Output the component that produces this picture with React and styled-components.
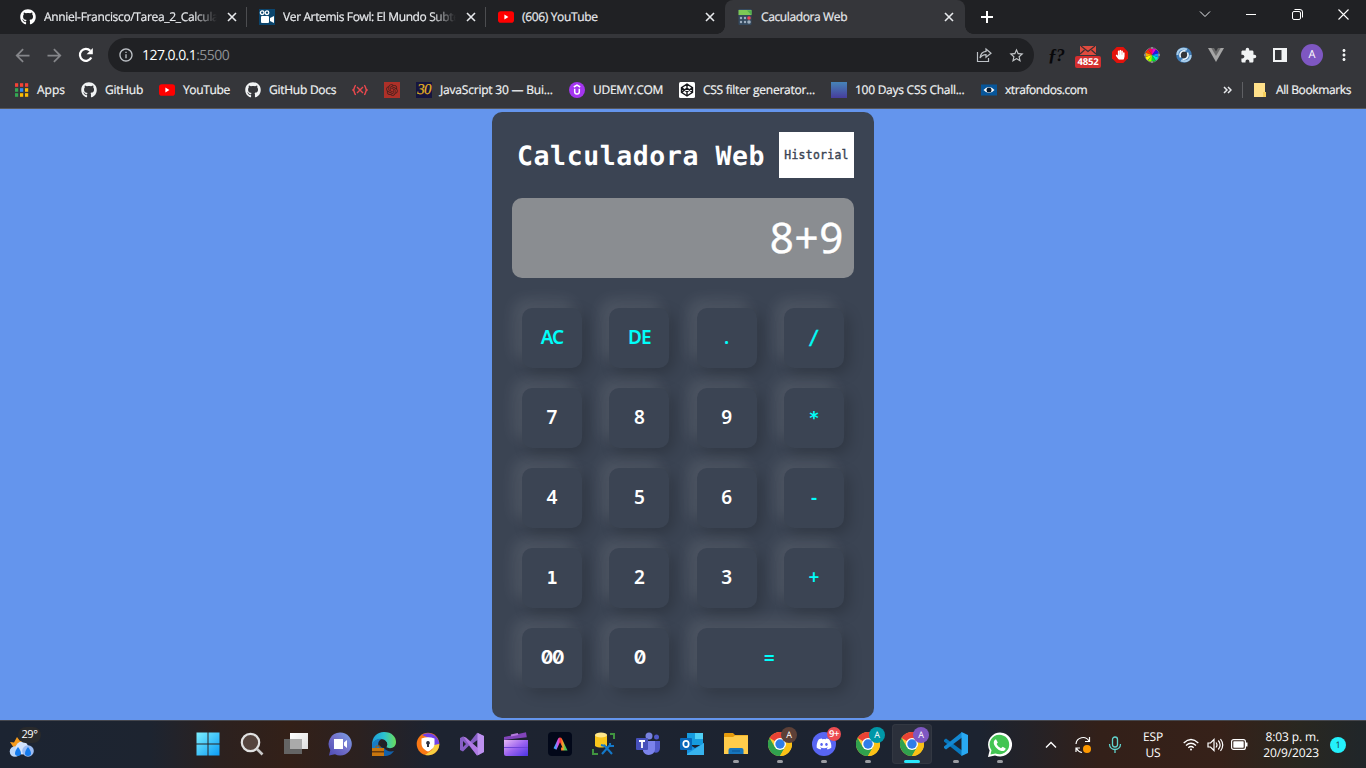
import React from "react";
import styled, { createGlobalStyle, css } from "styled-components";
import { FaGithub, FaDiscord, FaHandPaper } from "react-icons/fa";
import { RiOpenaiFill } from "react-icons/ri";
import { MdExtension, MdStarBorder, MdArrowBack, MdArrowForward, MdMoreVert, MdInfoOutline } from "react-icons/md";

const ui = `"Open Sans", "Noto Sans", sans-serif`;
const mono = `"DejaVu Sans Mono", "Liberation Mono", monospace`;

const GlobalStyle = createGlobalStyle`
  * { box-sizing: border-box; }
  html, body { margin: 0; height: 100%; overflow: hidden; }
  body { font-family: ${ui}; font-size: 12px; color: #fff; text-rendering: geometricPrecision; }
  svg { display: block; flex: none; }
`;

const Screen = styled.div`
  display: flex;
  flex-direction: column;
  width: 1366px;
  height: 768px;
  background: #6495ed;
`;

/* ---------- browser chrome ---------- */
const TabStrip = styled.header`
  display: flex;
  height: 34px;
  padding-left: 8px;
  background: #202124;
`;

const TabBox = styled.div`
  position: relative;
  display: flex;
  align-items: center;
  width: 239px;
  height: 34px;
  padding: 0 8px 0 12px;
  gap: 8px;
  ${(p) => p.$divider && css`
    background: linear-gradient(#4c4d50, #4c4d50) right 0 top 7px / 1px 20px no-repeat;
  `}
  ${(p) => p.$active && css`
    width: 240px;
    padding-right: 9px;
    background: #35363a;
    border-radius: 8px 8px 0 0;
    &::before, &::after {
      content: "";
      position: absolute;
      bottom: 0;
      width: 8px;
      height: 8px;
    }
    &::before { left: -8px; background: radial-gradient(circle at 0 0, transparent 7.5px, #35363a 8px); }
    &::after { right: -8px; background: radial-gradient(circle at 100% 0, transparent 7.5px, #35363a 8px); }
  `}
`;

const Favicon = styled.span`
  display: flex;
  justify-content: center;
  width: 16px;
  flex: none;
`;

const TabTitle = styled.span`
  flex: 1;
  min-width: 0;
  white-space: nowrap;
  line-height: 18px;
  color: #e8eaed;
  -webkit-text-stroke: 0.2px #e8eaed;
  letter-spacing: ${(p) => p.$spacing || -0.38}px;
  ${(p) => p.$fade && css`mask-image: linear-gradient(90deg, #000 calc(100% - 24px), transparent);`}
`;

const NewTab = styled.div`
  display: flex;
  align-items: center;
  padding-left: 16px;
  flex: 1;
`;

const WindowButtons = styled.div`
  display: flex;
  height: 28px;
`;

const WindowButton = styled.div`
  display: grid;
  place-items: center;
  width: 46px;
`;

const Toolbar = styled.div`
  display: flex;
  align-items: center;
  height: 38px;
  padding: 4px 6px 0;
  background: #35363a;
`;

const ToolButton = styled.div`
  display: grid;
  place-items: center;
  width: 32px;
  height: 34px;
  flex: none;
  color: ${(p) => p.$color || "#85868a"};
`;

const AddressBar = styled.div`
  display: flex;
  align-items: center;
  width: 926px;
  height: 34px;
  margin: 0 6px 0 6px;
  padding: 0 2px 0 10px;
  border-radius: 17px;
  background: #202124;
  color: #bdc1c6;
`;

const Url = styled.span`
  flex: 1;
  margin-left: 8px;
  padding-top: 1px;
  font-size: 14px;
  line-height: 20px;
  letter-spacing: -0.54px;
  color: #fff;
  span { color: #8f9195; }
`;

const MailExtension = styled.div`
  display: flex;
  flex-direction: column;
  align-items: center;
  gap: 1px;
  padding-top: 4px;
`;

const Count = styled.span`
  width: 26px;
  height: 12px;
  border-radius: 2px;
  background: #d32f2f;
  color: #fff;
  font: 700 9.5px/12px ${ui};
  letter-spacing: -0.2px;
  text-align: center;
`;

const FormulaMark = styled.span`
  font: italic 700 18px/24px "Liberation Serif", serif;
  letter-spacing: -1px;
  color: #08080a;
`;

const Avatar = styled.span`
  display: grid;
  place-items: center;
  width: 22px;
  height: 22px;
  border-radius: 50%;
  background: #7e57c2;
  color: #fff;
  font: 400 11px/22px ${ui};
`;

const Bookmarks = styled.nav`
  display: flex;
  align-items: center;
  height: 37px;
  padding-left: 13px;
  background: #35363a;
  border-bottom: 1px solid #56575b;
`;

const BookmarkItem = styled.div`
  display: flex;
  align-items: center;
  gap: 8px;
  width: ${(p) => p.$width}px;
  flex: none;
  white-space: nowrap;
  line-height: 18px;
  letter-spacing: ${(p) => p.$spacing ?? -0.26}px;
  color: #f1f3f4;
  -webkit-text-stroke: 0.2px #f1f3f4;
`;

const BookmarkDivider = styled.span`
  width: 1px;
  height: 16px;
  margin-right: 11px;
  background: #5f6064;
`;

const Gradient = styled.span`
  width: 16px;
  height: 16px;
  background: linear-gradient(#4684b8, #473d9c);
`;

const ThirtyMark = styled.span`
  width: 16px;
  height: 16px;
  background: #15153f;
  color: #e6b422;
  font: italic 400 15px/16px "Liberation Serif", serif;
  letter-spacing: -0.7px;
  text-align: center;
  -webkit-text-stroke: 0.2px #e6b422;
`;

/* ---------- calculator ---------- */
const Page = styled.main`
  display: flex;
  justify-content: center;
  align-items: flex-start;
  height: 611px;
  padding-top: 3px;
`;

const Calculator = styled.section`
  width: 382px;
  height: 606px;
  padding: 20px;
  border-radius: 10px;
  background: #3b4453;
  font-family: ${mono};
`;

const Heading = styled.div`
  display: flex;
  align-items: center;
  justify-content: space-between;
  height: 46px;
  padding-left: 5px;
`;

const Title = styled.h1`
  margin: 0;
  padding-top: 4px;
  font: 700 26.5px/36px ${mono};
  letter-spacing: 0.59px;
  white-space: nowrap;
`;

const HistoryButton = styled.button`
  width: 75px;
  height: 46px;
  padding: 0;
  border: 0;
  background: #fff;
  color: #3b4453;
  font: 400 11.4px/16px ${mono};
  letter-spacing: 0.3px;
  -webkit-text-stroke: 0.4px #3b4453;
`;

const Display = styled.div`
  height: 80px;
  margin-top: 20px;
  padding-right: 10px;
  border-radius: 10px;
  background: #8a8d91;
  font: 400 42px/80px "Noto Sans", sans-serif;
  letter-spacing: 0.7px;
  text-align: right;
  -webkit-text-stroke: 0.4px #fff;
`;

const Keypad = styled.div`
  display: grid;
  grid-template-columns: repeat(4, 60px);
  grid-auto-rows: 60px;
  justify-content: space-between;
  row-gap: 20px;
  padding: 30px 10px 0;
`;

const Key = styled.button`
  padding: 0 0 1px;
  border: 0;
  border-radius: 10px;
  background: #3b4453;
  color: ${(p) => (p.$accent ? "#00fefa" : "#fff")};
  font: 600 19px/59px "Noto Sans", sans-serif;
  box-shadow: -8px -8px 15px rgba(255, 255, 255, 0.1), 5px 5px 15px rgba(0, 0, 0, 0.2);
  ${(p) => p.$face === "mono" && css`font: 700 17.5px/60px ${mono};`}
  ${(p) => p.$face === "zero" && css`
    font: 700 18.5px/59px Inter, sans-serif;
    font-feature-settings: "zero";
    letter-spacing: -1.2px;
  `}
  ${(p) => p.$face === "pair" && css`letter-spacing: -1px; font-size: 19px;`}
  ${(p) => p.$face === "light" && css`font: 400 19px/59px ${mono}; -webkit-text-stroke: 0.5px #00fefa;`}
  ${(p) => p.$wide && css`grid-column: span 2; width: 145px;`}
`;

/* ---------- taskbar ---------- */
const Taskbar = styled.footer`
  display: flex;
  height: 48px;
  border-top: 1px solid #45474e;
  background: linear-gradient(90deg, #1c2432 0, #1d2430 150px, #2c211f 220px, #332018 290px, #2b2120 360px, #1d2330 430px,
    #1c2330 980px, #242227 1030px, #332019 1100px, #362119 1220px, #292720 1300px, #20262a 1366px);
`;

const Weather = styled.div`
  position: relative;
  width: 188px;
  padding: 16px 0 0 9px;
`;

const Temperature = styled.span`
  position: absolute;
  left: 18px;
  top: 6px;
  width: 23px;
  height: 16px;
  border-radius: 8px;
  background: #292a2c;
  font: 400 11px/16px ${ui};
  letter-spacing: -0.4px;
  text-align: center;
`;

const Apps = styled.div`
  display: flex;
  gap: 4px;
  padding-top: 3px;
  width: 845px;
`;

const AppSlot = styled.div`
  position: relative;
  display: flex;
  justify-content: center;
  width: 40px;
  height: 40px;
  padding-top: 8px;
  border-radius: 4px;
  ${(p) => p.$active && css`background: #2b303b; box-shadow: inset 0 0 0 1px #333842;`}
`;

const Running = styled.span`
  position: absolute;
  bottom: 1px;
  left: 50%;
  width: ${(p) => (p.$active ? 16 : 6)}px;
  height: 3px;
  border-radius: 2px;
  transform: translateX(-50%);
  background: ${(p) => (p.$active ? "#29e7fb" : "#9b9da2")};
`;

const Badge = styled.span`
  position: absolute;
  top: 3px;
  right: 3px;
  width: 16px;
  height: 16px;
  border-radius: 50%;
  background: ${(p) => p.$color};
  color: #fff;
  font: 400 9px/16px ${ui};
  text-align: center;
  ${(p) => p.$count && css`width: 14px; height: 14px; font: 600 9.5px/14px ${ui}; letter-spacing: -0.5px;`}
`;

const Tray = styled.div`
  display: flex;
  align-items: center;
  flex: 1;
  padding-left: 2px;
`;

const TrayIcon = styled.div`
  display: grid;
  place-items: center;
  width: ${(p) => p.$width || 32}px;
  height: 24px;
  flex: none;
`;

const Language = styled.div`
  width: 44px;
  text-align: center;
  line-height: 16px;
  letter-spacing: -0.2px;
`;

const Clock = styled.div`
  width: 64px;
  text-align: right;
  line-height: 16px;
  letter-spacing: -0.12px;
  white-space: nowrap;
`;

const Notice = styled.span`
  width: 16px;
  height: 16px;
  margin-left: 11px;
  border-radius: 50%;
  background: #24f0fb;
  color: #17353a;
  font: 400 9px/16px ${ui};
  text-align: center;
`;

/* ---------- drawings ---------- */
const Close = () => (
  <svg width="14" height="14" viewBox="0 0 14 14" stroke="#e8eaed" strokeWidth="1.6"><path d="M3 3l8 8M11 3l-8 8" /></svg>
);
const Reload = () => (
  <svg width="16" height="16" viewBox="0 0 16 16"><path d="M13.300 10.500A6 6 0 1 1 12.300 3.700" fill="none" stroke="#fff" strokeWidth="2.200" /><path d="M14.800 1v6.200H8.600z" fill="#fff" /></svg>
);
const YouTube = () => (
  <svg width="16" height="16" viewBox="0 0 16 16"><rect y="2.3" width="16" height="11.4" rx="2.8" fill="#f00" /><path d="M6.4 5.6v4.8l4-2.4z" fill="#fff" /></svg>
);
const Movie = () => (
  <svg width="16" height="16" viewBox="0 0 16 16"><rect width="16" height="16" fill="#0b456d" /><g fill="none" stroke="#fff" strokeWidth="1.3"><circle cx="3.2" cy="3.7" r="1.8" /><circle cx="8" cy="3.7" r="1.8" /></g><rect x="2" y="7" width="8" height="7" rx="1" fill="#fff" /><path d="M11 9l4-2v7l-4-2z" fill="#fff" /></svg>
);
const CalcIcon = () => (
  <svg width="16" height="16" viewBox="0 0 16 16"><rect x="1.5" width="13" height="16" rx="1" fill="#35495e" /><path d="M1.5 1h13v5h-13z" fill="#7ec855" /><path d="M10 1.5h4.5V6z" fill="#4fae50" /><g fill="#9fb0c0"><circle cx="4" cy="9" r="1.2" /><circle cx="8" cy="9" r="1.2" /><circle cx="4" cy="13" r="1.2" /><circle cx="8" cy="13" r="1.2" /><circle cx="12" cy="13" r="1.8" /></g><circle cx="12" cy="9" r="1.8" fill="#ef4557" /></svg>
);
const AppsGrid = () => {
  const colors = ["#f44336", "#f44336", "#f44336", "#34a853", "#2f8df5", "#fbbc04", "#34a853", "#fbbc04", "#fbbc04"];
  return (
    <svg width="16" height="16" viewBox="0 0 16 16">
      {colors.map((c, i) => <rect key={i} x={2 + (i % 3) * 5} y={1.2 + Math.floor(i / 3) * 5} width="3.2" height="3.6" fill={c} />)}
    </svg>
  );
};
const Brackets = () => (
  <svg width="16" height="16" viewBox="0 0 16 16" fill="none" stroke="#e9484d" strokeWidth="1.4"><path d="M4 3.5C1.500 3.500 3.500 7 1 8c2.500 1 .5 4.500 3 4.500M12 3.500c2.500 0 .5 3.500 3 4.500-2.500 1-.5 4.500-3 4.500M5 5l6 6M11 5l-6 6" /></svg>
);
const Spiral = () => (
  <svg width="16" height="16" viewBox="0 0 16 16"><rect width="16" height="16" fill="#ad3028" /><g color="#42201d"><RiOpenaiFill x="1" y="1" size={14} /></g></svg>
);
const Udemy = () => (
  <svg width="16" height="16" viewBox="0 0 16 16"><circle cx="8" cy="8" r="8" fill="#a435f0" /><path d="M4.8 5L8 3.1 11.2 5M5.7 6.8v3c0 3 4.6 3 4.6 0v-3" fill="none" stroke="#fff" strokeWidth="1.5" /></svg>
);
const Codepen = () => (
  <svg width="16" height="16" viewBox="0 0 16 16"><rect width="16" height="16" rx="1.5" fill="#fff" /><path d="M8 2l5.5 3.6v4.8L8 14l-5.5-3.6V5.600zM8 2v3.600M8 10.400V14M2.500 5.600L8 9.800l5.500-4.200M2.500 10.400L8 6.200l5.500 4.200" fill="none" stroke="#16171b" strokeWidth="1.400" /></svg>
);
const Eye = () => (
  <svg width="16" height="16" viewBox="0 0 16 16"><rect y="2.500" width="16" height="11" fill="#07569a" /><path d="M2.500 8Q8 2 13.500 8 8 14 2.500 8" fill="#fff" /><circle cx="8" cy="8" r="2.500" fill="#07182b" /></svg>
);
const Note = () => (
  <svg width="14" height="16" viewBox="0 0 14 16"><path d="M0 1h11v9h1v5H0z" fill="#ffe08a" /><path d="M9 10h3v5H9z" fill="#f7cf5c" /></svg>
);
const Share = () => (
  <svg width="16" height="16" viewBox="0 0 16 16" fill="none" stroke="#bdc1c6" strokeWidth="1.200"><path d="M1.500 5v9.500h11V11M10 2l5 4.200-5 4V7.700C7.500 7.700 5.600 8.500 4 11c.4-3.500 2.600-6.200 6-6.600z" /></svg>
);
const Mail = () => (
  <svg width="18" height="9" viewBox="0 0 18 9"><path d="M1 0h16v9H1z" fill="#df4b3e" /><path d="M2 0l7 5.500L16 0M1 8l4.500-4M17 8l-4.500-4" fill="none" stroke="#3a3034" strokeWidth="1.200" /></svg>
);
const BlockHand = () => (
  <svg width="16" height="16" viewBox="0 0 16 16"><path d="M4.700 0h6.600L16 4.700v6.600L11.300 16H4.700L0 11.300V4.700z" fill="#e3120b" /><g color="#fff"><FaHandPaper x="3.200" y="2.700" size={10} /></g></svg>
);
const Wheel = () => {
  const colors = ["#e0c", "#f05", "#f30", "#fa0", "#ff0", "#9f0", "#0d3", "#0ec", "#09f", "#21e"];
  return (
    <svg width="16" height="16" viewBox="-8 -8 16 16">
      <circle r="7.200" fill="none" stroke="#87878a" strokeWidth=".8" />
      {colors.map((c, i) => (
        <path key={c} d="M0 0L-2.200-7A7.300 7.300 0 0 1 2.200-7z" fill={c} transform={`rotate(${i * -36 + 20}) scale(.93)`} />
      ))}
      <path d="M-1-8h2v2h-2zM-1 6h2v2h-2zM-8-1h2v2h-2zM6-1h2v2H6z" fill="#87878a" />
    </svg>
  );
};
const Swirl = () => (
  <svg width="16" height="16" viewBox="0 0 16 16" fill="none"><circle cx="8" cy="8" r="5.600" stroke="#3f7bb5" strokeWidth="4.400" /><path d="M1.500 8C1 3 5.500.500 11 2.500M14.500 8c.5 5-4 7.500-9.500 5.500" stroke="#a9cdea" strokeWidth="2" /><path d="M4.500 10.500C2.500 6 6 3 9.500 4M11.500 5.500c2 4.500-1.500 7.500-5 6.500" stroke="#eef6fc" strokeWidth="1.500" /></svg>
);
const Vue = () => (
  <svg width="16" height="16" viewBox="0 0 16 16"><path d="M0 1h16L8 15z" fill="#a5a5a5" /><path d="M3.300 1h9.400L8 9z" fill="#6b6b6b" /><path d="M6 1h4L8 4.500z" fill="#35363a" /></svg>
);
const SidePanel = () => (
  <svg width="14" height="14" viewBox="0 0 14 14"><path d="M0 0h14v14H0z" fill="#f1f3f4" /><path d="M2 2h6.500v10H2z" fill="#35363a" /></svg>
);
const WeatherIcon = () => (
  <svg width="25" height="21" viewBox="0 0 25 21"><path d="M1 5l4 .5L8 0l3 4 3-1v8H5L1 5z" fill="#f59a1c" /><circle cx="6" cy="14.500" r="5.300" fill="#bcd7fa" /><circle cx="13" cy="11" r="6.500" fill="#d3e3fb" /><circle cx="19" cy="14" r="5.800" fill="#9dbdf3" /><path d="M9 10c4 5 4 9 0 9s-4-4 0-9zM19 10c4 5 4 9 0 9s-4-4 0-9z" fill="#147bed" /></svg>
);
const Windows = () => (
  <svg width="24" height="24" viewBox="0 0 24 24"><defs><linearGradient id="win" x1="0" y1="0" x2="1" y2="1" gradientUnits="objectBoundingBox"><stop stopColor="#7df0ff" /><stop offset="1" stopColor="#0a9bf5" /></linearGradient></defs><path d="M.5.500h11v11H.5zM12.500.500h11v11h-11zM.5 12.500h11v11H.5zM12.500 12.500h11v11h-11z" fill="url(#win)" /></svg>
);
const Search = () => (
  <svg width="24" height="24" viewBox="0 0 24 24"><circle cx="10.500" cy="10.500" r="8.700" fill="#55443e" stroke="#e1e1e1" strokeWidth="2.200" /><path d="M17 17l5.500 5.500" stroke="#c9c9c9" strokeWidth="2.600" /></svg>
);
const TaskView = () => (
  <svg width="24" height="24" viewBox="0 0 24 24"><defs><linearGradient id="tv" x1="0" y1="0" x2="1" y2="1"><stop stopColor="#fff" /><stop offset="1" stopColor="#ddd" /></linearGradient></defs><path d="M6 1h18v16H6z" fill="url(#tv)" /><path d="M0 7h18v15H0z" fill="#646464" /><path d="M6 7h12v10H6z" fill="#aaa" /></svg>
);
const Chat = () => (
  <svg width="24" height="24" viewBox="0 0 24 24"><defs><linearGradient id="chat" x1="0" y1="1" x2="1" y2="0"><stop stopColor="#4d4bb5" /><stop offset=".5" stopColor="#7370c9" /><stop offset="1" stopColor="#7aa3ea" /></linearGradient></defs><path d="M12 .5a11.500 11.500 0 1 1-5 21.700L1 23.500 2.300 18A11.500 11.500 0 0 1 12 .5z" fill="url(#chat)" /><path d="M6 7h9v10H6zM16 10.500L19 8v8l-3-2.500z" fill="#fff" /></svg>
);
const Edge = () => (
  <svg width="24" height="24" viewBox="0 0 24 24"><defs><linearGradient id="edge"><stop stopColor="#1d9dd9" /><stop offset=".5" stopColor="#2bc2d0" /><stop offset="1" stopColor="#6bdd5b" /></linearGradient></defs><path d="M.2 12C0 20 5 24 12 24c5 0 8-2 10-5-4 1-8 0-10-3z" fill="#1261ab" /><path d="M0 13C0 5 5 0 12 0c8 0 12 5 12 10 0 6-6 7.500-10 5 3-3 0-8-5-8-4 0-7 2-9 6z" fill="url(#edge)" /><path d="M0 12c2-4 6-6 10-5-4 1-5 6-2 9H0z" fill="#187cc4" /><circle cx="12" cy="12.500" r="3.200" fill="#202228" /><path d="M0 16h12v8H0z" fill="#c9760e" /><path d="M0 19h12v1.500H0z" fill="#6b3b0b" /><path d="M4 16v-2h4v2" fill="none" stroke="#a25d10" /></svg>
);
const Shield = () => (
  <svg width="24" height="24" viewBox="0 0 24 24"><circle cx="12" cy="12" r="11.300" fill="#fa7814" /><path d="M6 3a11.300 11.300 0 0 1 17.300 9L18 14V8z" fill="#7142e8" /><path d="M23.300 12A11.300 11.300 0 0 1 9 22.900l7-5 2-5z" fill="#f7ce41" /><path d="M5.500 6.500Q12 4 18.500 6.500v5c0 4-3 6.500-6.500 8-3.500-1.500-6.500-4-6.500-8z" fill="#fff" /><path d="M12 9a1.900 1.900 0 0 1 1 3.500V15h-2v-2.500A1.900 1.900 0 0 1 12 9z" fill="#2d3040" /></svg>
);
const VisualStudio = () => (
  <svg width="24" height="24" viewBox="0 0 24 24"><path d="M0 6l3-1.500 6 6.500L17 1l7 3v16l-7 3.500-8-10-6 6L0 18zM3 9v6l3-3zM17.500 8L12 12l5.500 4z" fill="#865fc5" fillRule="evenodd" /><path d="M3 4.500L17 23.500l1-7.300L6 5.500z" fill="#b079e3" /><path d="M17.500.8L24 4v16l-6.500 3.500z" fill="#bd91ef" /></svg>
);
const Clapper = () => (
  <svg width="24" height="24" viewBox="0 0 24 24"><defs><linearGradient id="clap" x1="0" y1="0" x2="1" y2="1"><stop stopColor="#e8b7f5" /><stop offset=".5" stopColor="#9b63ef" /><stop offset="1" stopColor="#4a34e5" /></linearGradient></defs><path d="M0 5L22 .3l.8 5L0 8z" fill="#8144ba" /><path d="M0 8h24v16H2q-2 0-2-2z" fill="url(#clap)" /><path d="M0 15.500h24" stroke="#6f43d6" /><path d="M7 3.500l7-1.500" stroke="#b57bde" strokeWidth="2" /></svg>
);
const Adobe = () => (
  <svg width="24" height="24" viewBox="0 0 24 24"><defs><linearGradient id="adobe"><stop stopColor="#37a7ff" /><stop offset=".3" stopColor="#d94ff2" /><stop offset=".55" stopColor="#fb4130" /><stop offset=".8" stopColor="#f7a927" /><stop offset="1" stopColor="#48c55e" /></linearGradient></defs><rect width="24" height="24" rx="4" fill="#020819" /><path d="M7 17l4.500-9.500q.5-1 1 0L17 17h-4" fill="none" stroke="url(#adobe)" strokeWidth="3.200" /></svg>
);
const Database = () => (
  <svg width="24" height="24" viewBox="0 0 24 24"><path d="M3 3v11c3 2 9 2 12 0V3z" fill="#f8c51c" /><ellipse cx="9" cy="3" rx="6" ry="2.500" fill="#ffe78a" /><path d="M18 2h4v5M1 17v5h5" fill="none" stroke="#40943f" strokeWidth="2" /><path d="M10 22l8-9M12 13l8 9M9 13l4 1M18 11v3h4" stroke="#1478c8" strokeWidth="2.100" fill="none" /></svg>
);
const Teams = () => (
  <svg width="24" height="24" viewBox="0 0 24 24"><circle cx="13" cy="4" r="3.500" fill="#7882df" /><circle cx="20.500" cy="5" r="2.500" fill="#5059c9" /><path d="M16 9h8v7c0 5-5 6-8 3z" fill="#5059c9" /><path d="M7 9h12v8c0 7-10 8-12 2z" fill="#7b83eb" /><rect y="6" width="12" height="12" rx="1" fill="#4650ba" /><path d="M3 9h6M6 9v7" stroke="#fff" strokeWidth="1.800" /></svg>
);
const Outlook = () => (
  <svg width="24" height="24" viewBox="0 0 24 24"><path d="M7 1h16v12H7z" fill="#169cdf" /><path d="M15 1h8v6h-8z" fill="#50d0f5" /><path d="M7 11l8 5 9-5v12H7z" fill="#1490df" /><path d="M24 11L7 22v1h17z" fill="#37b3ed" /><rect y="6" width="12" height="12" rx="1" fill="#0868ba" /><ellipse cx="6" cy="12" rx="2.700" ry="3.200" fill="none" stroke="#fff" strokeWidth="1.700" /></svg>
);
const Explorer = () => (
  <svg width="24" height="24" viewBox="0 0 24 24"><path d="M0 2q0-1 1-1h8l2 2h13v6H0z" fill="#e69b0c" /><path d="M0 5h9l2-1.500h13V22H0z" fill="#ffcc4b" /><path d="M4.500 22v-4q0-2 2-2h11q2 0 2 2v4z" fill="#1675bd" /><path d="M8 19h8" stroke="#0c5492" /></svg>
);
const Chrome = () => (
  <svg width="24" height="24" viewBox="0 0 24 24"><circle cx="12" cy="12" r="12" fill="#fc3" /><path d="M12 12L1.600 6A12 12 0 0 1 22.400 6z" fill="#e94235" /><path d="M1.600 6A12 12 0 0 0 12 24l5.200-9L12 12 6.800 15z" fill="#30a14e" /><path d="M12 6h10.400A12 12 0 0 1 12 24l5.200-9z" fill="#fbc116" /><circle cx="12" cy="12" r="6" fill="#fff" /><circle cx="12" cy="12" r="4.700" fill="#2f7de9" /></svg>
);
const Discord = () => (
  <svg width="24" height="24" viewBox="0 0 24 24"><circle cx="12" cy="12" r="12" fill="#5865f2" /><g color="#fff"><FaDiscord x="4" y="4" size={16} /></g></svg>
);
const VSCode = () => (
  <svg width="24" height="24" viewBox="0 0 24 24"><path d="M0 8l2-1.500 16 12V24L0 9.500z" fill="#0877bd" /><path d="M0 16l2 1.500L18 5.500V0L0 14.500z" fill="#1388d2" /><path d="M17.500 0L24 3v18l-6.500 3z" fill="#29a9f2" /></svg>
);
const WhatsApp = () => (
  <svg width="26" height="26" viewBox="0 0 26 26"><path d="M1 25l1.600-6.500A12 12 0 1 1 8 23.500z" fill="#fff" /><path d="M3.500 22.500l1-4.200a9.800 9.800 0 1 1 4 3.200z" fill="#43c553" /><path d="M9 7.300l1.800 3.200-1.200 1.600c1 2 2.200 3.200 4.400 4.100l1.700-1.500 3 1.700c-.5 2.500-2.500 3-4.300 2.600-3.500-.8-7-4.400-7.600-7.500-.3-2 .7-4 2.200-4.200z" fill="#fff" /></svg>
);

const tabs = [
  { icon: <FaGithub size={16} color="#fff" />, title: "Anniel-Francisco/Tarea_2_Calcula", fade: true, divider: true, spacing: -0.33 },
  { icon: <Movie />, title: "Ver Artemis Fowl: El Mundo Subte", fade: true, divider: true, spacing: -0.38 },
  { icon: <YouTube />, title: "(606) YouTube", spacing: -0.34 },
  { icon: <CalcIcon />, title: "Caculadora Web", active: true },
];

const bookmarks = [
  { icon: <AppsGrid />, label: "Apps", width: 68, spacing: 0 },
  { icon: <FaGithub size={16} />, label: "GitHub", width: 78 },
  { icon: <YouTube />, label: "YouTube", width: 86, spacing: -0.36 },
  { icon: <FaGithub size={16} />, label: "GitHub Docs", width: 107 },
  { icon: <Brackets />, width: 32 },
  { icon: <Spiral />, width: 32 },
  { icon: <ThirtyMark>30</ThirtyMark>, label: "JavaScript 30 — Bui...", width: 153, spacing: -0.2 },
  { icon: <Udemy />, label: "UDEMY.COM", width: 110 },
  { icon: <Codepen />, label: "CSS filter generator...", width: 152 },
  { icon: <Gradient />, label: "100 Days CSS Chall...", width: 150 },
  { icon: <Eye />, label: "xtrafondos.com", width: 242, spacing: -0.43 },
];

const keys = ["AC", "DE", ".", "/", "7", "8", "9", "*", "4", "5", "6", "-", "1", "2", "3", "+", "00", "0", "="];
const keyFaces = { 1: "mono", 0: "zero", "00": "zero", "*": "mono", "=": "mono", AC: "pair", DE: "pair", "/": "light" };

const apps = [
  { icon: <Windows /> }, { icon: <Search /> }, { icon: <TaskView /> }, { icon: <Chat /> }, { icon: <Edge /> },
  { icon: <Shield /> }, { icon: <VisualStudio /> }, { icon: <Clapper /> }, { icon: <Adobe /> }, { icon: <Database /> },
  { icon: <Teams /> }, { icon: <Outlook /> },
  { icon: <Explorer />, running: true },
  { icon: <Chrome />, running: true, badge: "A", color: "#5d4037" },
  { icon: <Discord />, running: true, badge: "9+", color: "#ed4d51", count: true },
  { icon: <Chrome />, running: true, badge: "A", color: "#0097a7" },
  { icon: <Chrome />, running: true, badge: "A", color: "#7e57c2", active: true },
  { icon: <VSCode />, running: true },
  { icon: <WhatsApp />, running: true },
];

export default function App() {
  return (
    <Screen>
      <GlobalStyle />
      <TabStrip>
        {tabs.map((t) => (
          <TabBox key={t.title} $active={t.active} $divider={t.divider}>
            <Favicon>{t.icon}</Favicon>
            <TabTitle $fade={t.fade} $spacing={t.spacing}>{t.title}</TabTitle>
            <Close />
          </TabBox>
        ))}
        <NewTab>
          <svg width="12" height="12" viewBox="0 0 12 12" stroke="#fff" strokeWidth="2"><path d="M6 0v12M0 6h12" /></svg>
        </NewTab>
        <WindowButtons>
          <WindowButton><svg width="12" height="8" viewBox="0 0 12 8" fill="none" stroke="#e8eaed"><path d="M1 1.500l5 5 5-5" /></svg></WindowButton>
          <WindowButton><svg width="10" height="2" viewBox="0 0 10 2"><path d="M0 1h10v1H0z" fill="#fff" /></svg></WindowButton>
          <WindowButton><svg width="11" height="11" viewBox="0 0 11 11" fill="none" stroke="#fff"><rect x=".5" y="2.500" width="8" height="8" rx="1.500" /><path d="M2.500.5H8q2.500 0 2.500 2.500v5.500" /></svg></WindowButton>
          <WindowButton><svg width="11" height="11" viewBox="0 0 11 11" stroke="#fff" strokeWidth="1.100"><path d="M.5.500l10 10M10.500.500l-10 10" /></svg></WindowButton>
        </WindowButtons>
      </TabStrip>

      <Toolbar>
        <ToolButton><MdArrowBack size={21} /></ToolButton>
        <ToolButton><MdArrowForward size={21} /></ToolButton>
        <ToolButton><Reload /></ToolButton>
        <AddressBar>
          <MdInfoOutline size={16} />
          <Url>127.0.0.1<span>:5500</span></Url>
          <ToolButton><Share /></ToolButton>
          <ToolButton $color="#c4c7ca"><MdStarBorder size={17} /></ToolButton>
        </AddressBar>
        <ToolButton><FormulaMark>ƒ?</FormulaMark></ToolButton>
        <ToolButton><MailExtension><Mail /><Count>4852</Count></MailExtension></ToolButton>
        <ToolButton><BlockHand /></ToolButton>
        <ToolButton><Wheel /></ToolButton>
        <ToolButton><Swirl /></ToolButton>
        <ToolButton><Vue /></ToolButton>
        <ToolButton $color="#f1f3f4"><MdExtension size={17} /></ToolButton>
        <ToolButton><SidePanel /></ToolButton>
        <ToolButton><Avatar>A</Avatar></ToolButton>
        <ToolButton $color="#f1f3f4"><MdMoreVert size={18} /></ToolButton>
      </Toolbar>

      <Bookmarks>
        {bookmarks.map((b, i) => (
          <BookmarkItem key={i} $width={b.width} $spacing={b.spacing}>{b.icon}{b.label}</BookmarkItem>
        ))}
        <BookmarkItem $width={19}>
          <svg width="9" height="8" viewBox="0 0 9 8" fill="none" stroke="#e8eaed" strokeWidth="1.500"><path d="M1 1l3 3-3 3M5 1l3 3-3 3" /></svg>
        </BookmarkItem>
        <BookmarkDivider />
        <BookmarkItem $width={110} $spacing={-0.38}><Note />All Bookmarks</BookmarkItem>
      </Bookmarks>

      <Page>
        <Calculator>
          <Heading>
            <Title>Calculadora Web</Title>
            <HistoryButton>Historial</HistoryButton>
          </Heading>
          <Display>8+9</Display>
          <Keypad>
            {keys.map((k) => (
              <Key key={k} $accent={!/^\d+$/.test(k)} $face={keyFaces[k]} $wide={k === "="}>{k}</Key>
            ))}
          </Keypad>
        </Calculator>
      </Page>

      <Taskbar>
        <Weather><WeatherIcon /><Temperature>29°</Temperature></Weather>
        <Apps>
          {apps.map((a, i) => (
            <AppSlot key={i} $active={a.active}>
              {a.icon}
              {a.badge && <Badge $color={a.color} $count={a.count}>{a.badge}</Badge>}
              {a.running && <Running $active={a.active} />}
            </AppSlot>
          ))}
        </Apps>
        <Tray>
          <TrayIcon><svg width="12" height="8" viewBox="0 0 12 8" fill="none" stroke="#fff" strokeWidth="1.400"><path d="M1 6.500l5-5 5 5" /></svg></TrayIcon>
          <TrayIcon><svg width="18" height="18" viewBox="0 0 18 18" fill="none" stroke="#fff" strokeWidth="1.200"><path d="M2 8a7 7 0 0 1 13-3M15.500 1v4.500H11M2 16v-4h4M2.500 12.500c1 2 3 3.500 5.500 4" /><circle cx="13" cy="13" r="4" fill="#f90" stroke="none" /></svg></TrayIcon>
          <TrayIcon><svg width="14" height="18" viewBox="0 0 14 18" fill="none" stroke="#62d5ce" strokeWidth="1.300"><rect x="4.500" y="1" width="5" height="10" rx="2.500" /><path d="M1.500 8c0 7.300 11 7.300 11 0M7 13.500V17" /></svg></TrayIcon>
          <Language>ESP<br />US</Language>
          <TrayIcon $width={32}><svg width="16" height="13" viewBox="0 0 16 13" fill="none" stroke="#fff" strokeWidth="1.300"><path d="M.7 5Q8-2 15.300 5M3 7.500q5-4.500 10 0M5.300 9.800q2.700-2.500 5.400 0" /><circle cx="8" cy="11.500" r="1" fill="#fff" stroke="none" /></svg></TrayIcon>
          <TrayIcon $width={16}><svg width="17" height="14" viewBox="0 0 17 14" fill="none" stroke="#fff" strokeWidth="1.200"><path d="M1 5h2.500L7 1.500v11L3.500 9H1zM9 4.500q2 2.500 0 5M11.300 2.500q3.700 4.500 0 9M13.500 1q4.500 6 0 12" /></svg></TrayIcon>
          <TrayIcon $width={32}><svg width="17" height="11" viewBox="0 0 17 11"><rect x=".6" y=".6" width="13.800" height="9.800" rx="2" fill="none" stroke="#fff" strokeWidth="1.200" /><rect x="2.300" y="2.300" width="10.400" height="6.400" rx=".6" fill="#fff" /><path d="M15 3.500h1.500v4H15z" fill="#fff" /></svg></TrayIcon>
          <Clock>8:03 p. m.<br />20/9/2023</Clock>
          <Notice>1</Notice>
        </Tray>
      </Taskbar>
    </Screen>
  );
}
